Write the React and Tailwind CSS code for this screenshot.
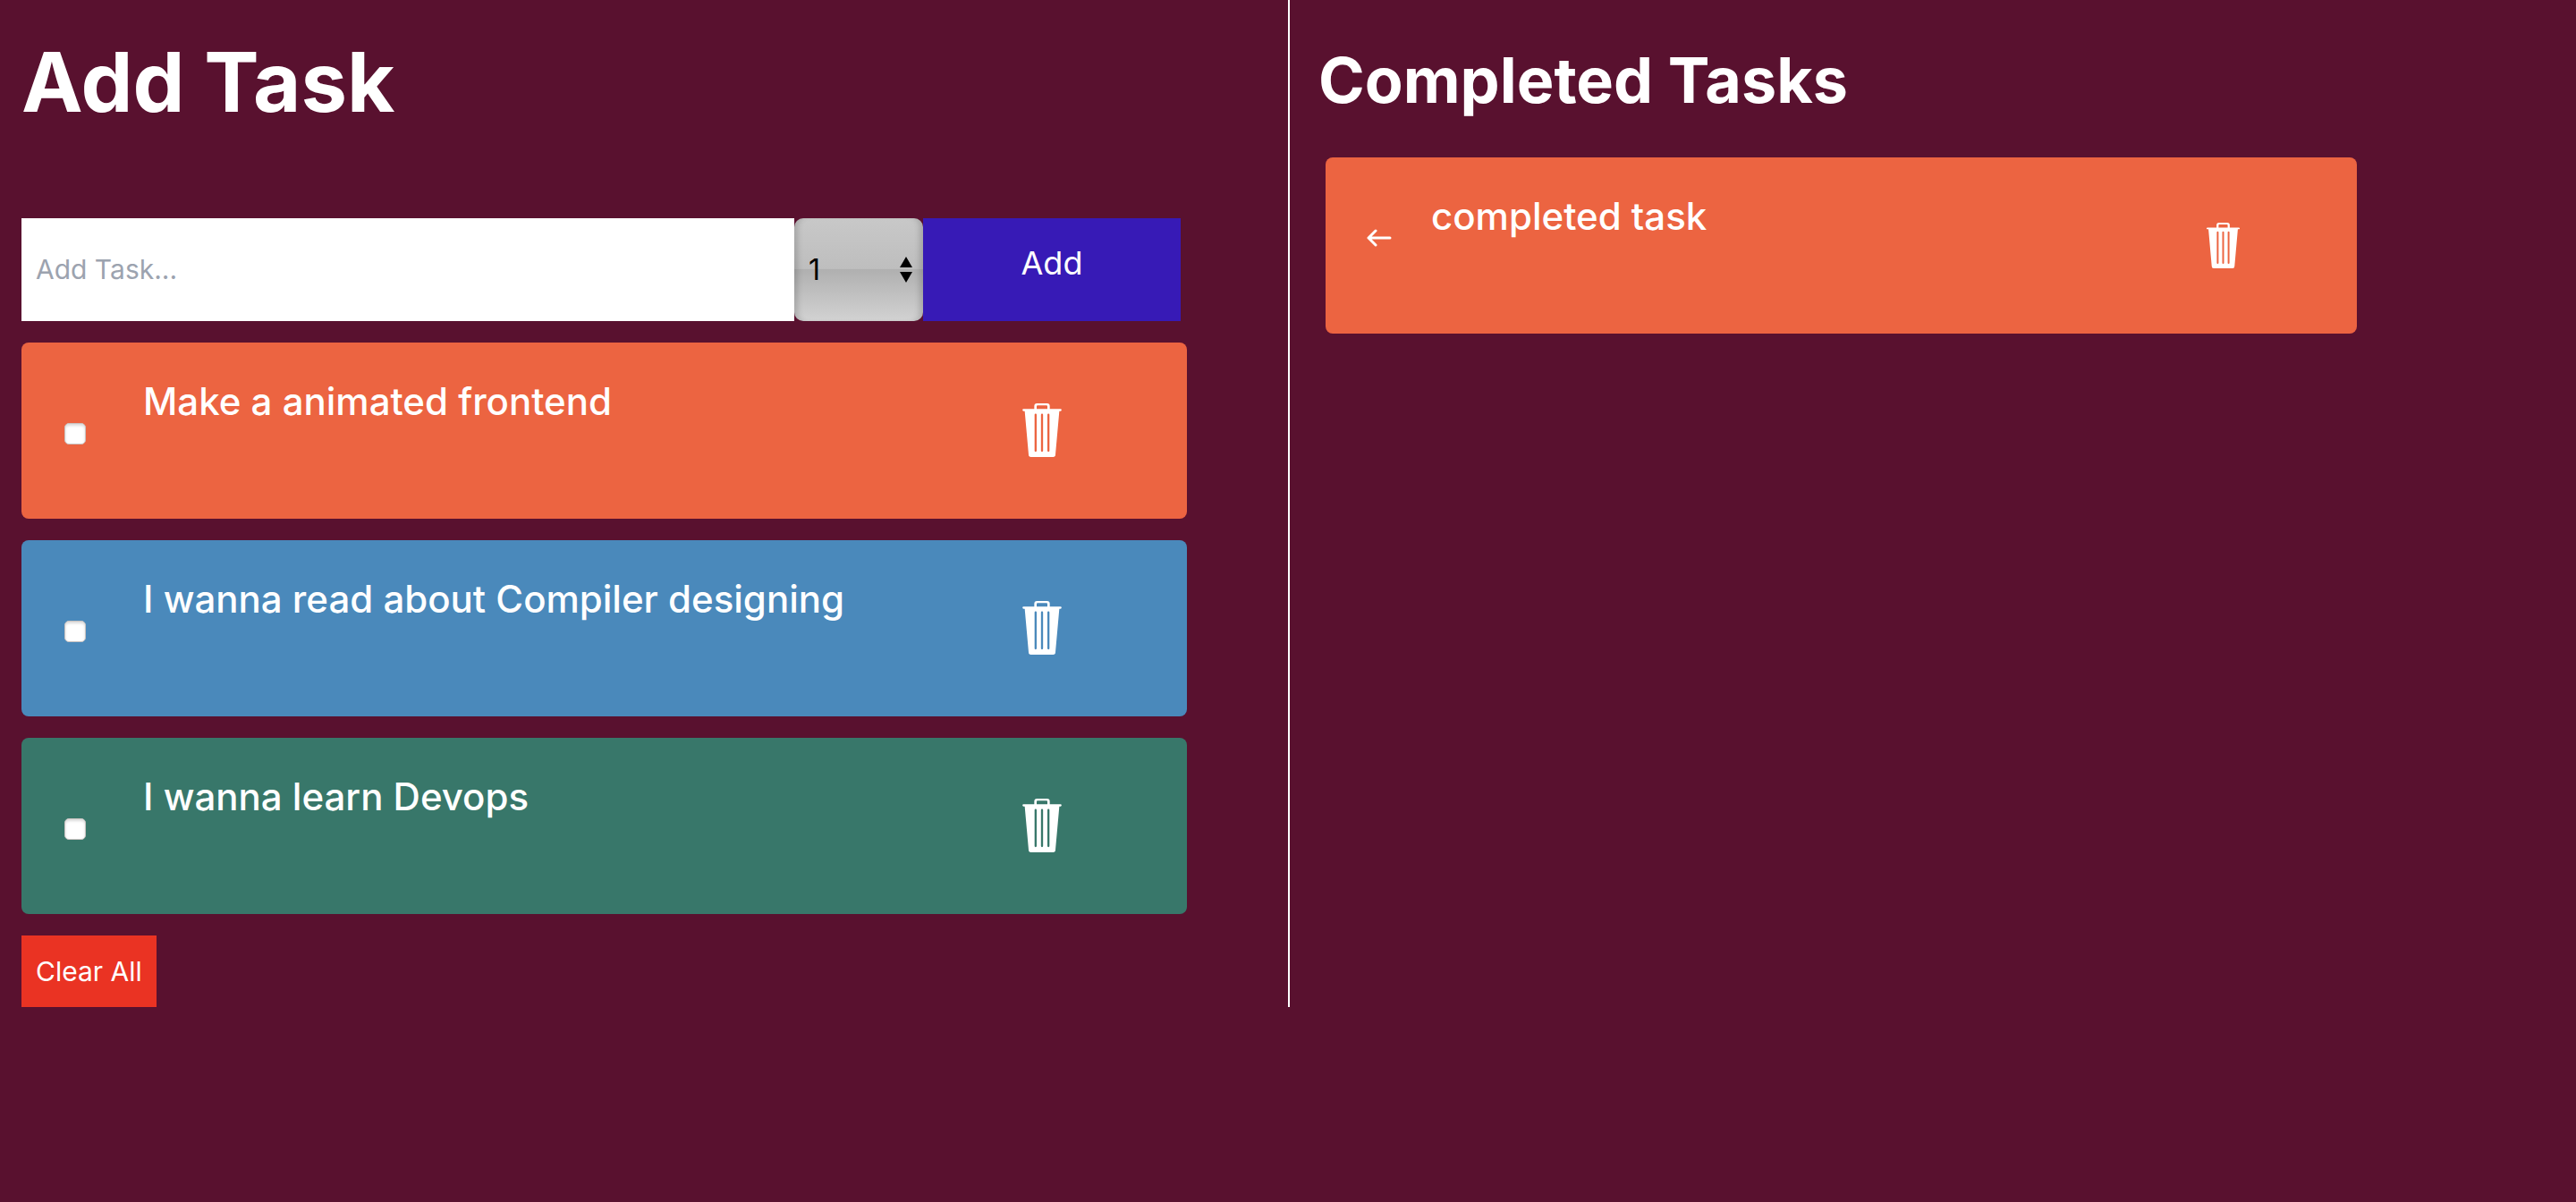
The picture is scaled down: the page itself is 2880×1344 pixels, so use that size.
function TrashIcon({ className }) {
  return (
    <svg viewBox="0 0 130 180" className={className} fill="currentColor" aria-hidden="true">
      <path
        fillRule="evenodd"
        d="M39 19V9a9 9 0 0 1 9-9h34a9 9 0 0 1 9 9v10h36a3 3 0 0 1 0 7h-4l-13 146a8 8 0 0 1-8 8H28a8 8 0 0 1-8-8L7 26H3a3 3 0 0 1 0-7zM47 19h36V10a3 3 0 0 0-3-3H50a3 3 0 0 0-3 3zM40 38v121a3.5 3.5 0 0 0 7 0V38a3.5 3.5 0 0 0-7 0zM61.500 38v121a3.500 3.500 0 0 0 7 0V38a3.500 3.500 0 0 0-7 0zM83 38v121a3.500 3.500 0 0 0 7 0V38a3.500 3.500 0 0 0-7 0z"
      />
    </svg>
  );
}

function ArrowLeftIcon({ className }) {
  return (
    <svg
      viewBox="0 0 28 20"
      className={className}
      fill="none"
      stroke="currentColor"
      strokeWidth="3"
      strokeLinecap="round"
      strokeLinejoin="round"
      aria-hidden="true"
    >
      <path d="M26 10H2M10 2L2 10L10 18" />
    </svg>
  );
}

const tasks = [
  { id: 'frontend', title: 'Make a animated frontend', color: 'bg-[#ec6441]' },
  { id: 'compiler', title: 'I wanna read about Compiler designing', color: 'bg-[#4a89bb]' },
  { id: 'devops', title: 'I wanna learn Devops', color: 'bg-[#38776a]' },
];

function TaskCard({ task }) {
  return (
    <li className={`flex h-[197px] w-full items-start rounded-lg pl-12 ${task.color}`}>
      <input
        id={task.id}
        type="checkbox"
        className="mt-[90px] size-6 shrink-0 appearance-none rounded-[5px] border border-[#c9c3c1] bg-white shadow-[inset_0_2px_3px_rgba(0,0,0,0.15)] checked:bg-blue-600"
      />
      <label htmlFor={task.id} className="mt-10 ml-16 flex-1 text-[42px] leading-[52px] font-medium">
        {task.title}
      </label>
      <button type="button" aria-label={`Delete ${task.title}`} className="mt-17 mr-35">
        <TrashIcon className="h-15 w-11" />
      </button>
    </li>
  );
}

export default function App() {
  return (
    <div className="min-h-screen bg-[#59112f] font-['Inter','Liberation_Sans',sans-serif] text-white">
      <main className="grid grid-cols-2">
        <section className="pt-11 pl-6">
          <h1 className="text-[92px] leading-[96px] font-bold">Add Task</h1>
          <form className="mt-26 mr-30 flex h-[115px]" onSubmit={(e) => e.preventDefault()}>
            <input
              type="text"
              aria-label="Add Task"
              placeholder="Add Task..."
              className="min-w-0 grow bg-white px-4 text-[30px] text-black placeholder:text-[#9ca3af]"
            />
            <div className="relative w-36 shrink-0">
              <select
                aria-label="Priority"
                defaultValue="1"
                className="h-full w-full appearance-none rounded-[10px] bg-[linear-gradient(to_bottom,#c8c8c8_0%,#bebebe_49%,#b0b0b0_50%,#d2d2d2_100%)] pl-4 text-[32px] text-black shadow-[inset_8px_0_6px_-4px_rgba(0,0,0,0.16),inset_-8px_0_6px_-4px_rgba(0,0,0,0.16)]"
              >
                <option>1</option>
                <option>2</option>
                <option>3</option>
              </select>
              <svg
                viewBox="0 0 14 29"
                className="pointer-events-none absolute top-[43px] right-3 h-[29px] w-3.5"
                aria-hidden="true"
              >
                <path d="M7 0l7 12H0zM7 29l7-12H0z" />
              </svg>
            </div>
            <button type="submit" className="w-72 shrink-0 bg-[#371ab6] pb-4 text-[36px]">
              Add
            </button>
          </form>
          <ul className="mt-6 flex w-[92%] flex-col gap-6">
            {tasks.map((task) => (
              <TaskCard key={task.id} task={task} />
            ))}
          </ul>
          <button type="button" className="mt-6 h-20 bg-[#ea3323] px-4 text-[30px]">
            Clear All
          </button>
        </section>

        <section className="border-l-2 border-white pt-[54px] pl-8">
          <h2 className="text-[70px] leading-[72px] font-bold">Completed Tasks</h2>
          <ul className="mt-[50px] ml-2 w-[82%]">
            <li className="flex h-[197px] items-start rounded-lg bg-[#ec6441] pl-[46px]">
              <button type="button" aria-label="Move completed task back" className="mt-20">
                <ArrowLeftIcon className="h-5 w-7" />
              </button>
              <p className="mt-10 ml-11 flex-1 text-[42px] leading-[52px] font-medium">completed task</p>
              <button type="button" aria-label="Delete completed task" className="mt-[73px] mr-[131px]">
                <TrashIcon className="h-[51px] w-[37px]" />
              </button>
            </li>
          </ul>
        </section>
      </main>
    </div>
  );
}
